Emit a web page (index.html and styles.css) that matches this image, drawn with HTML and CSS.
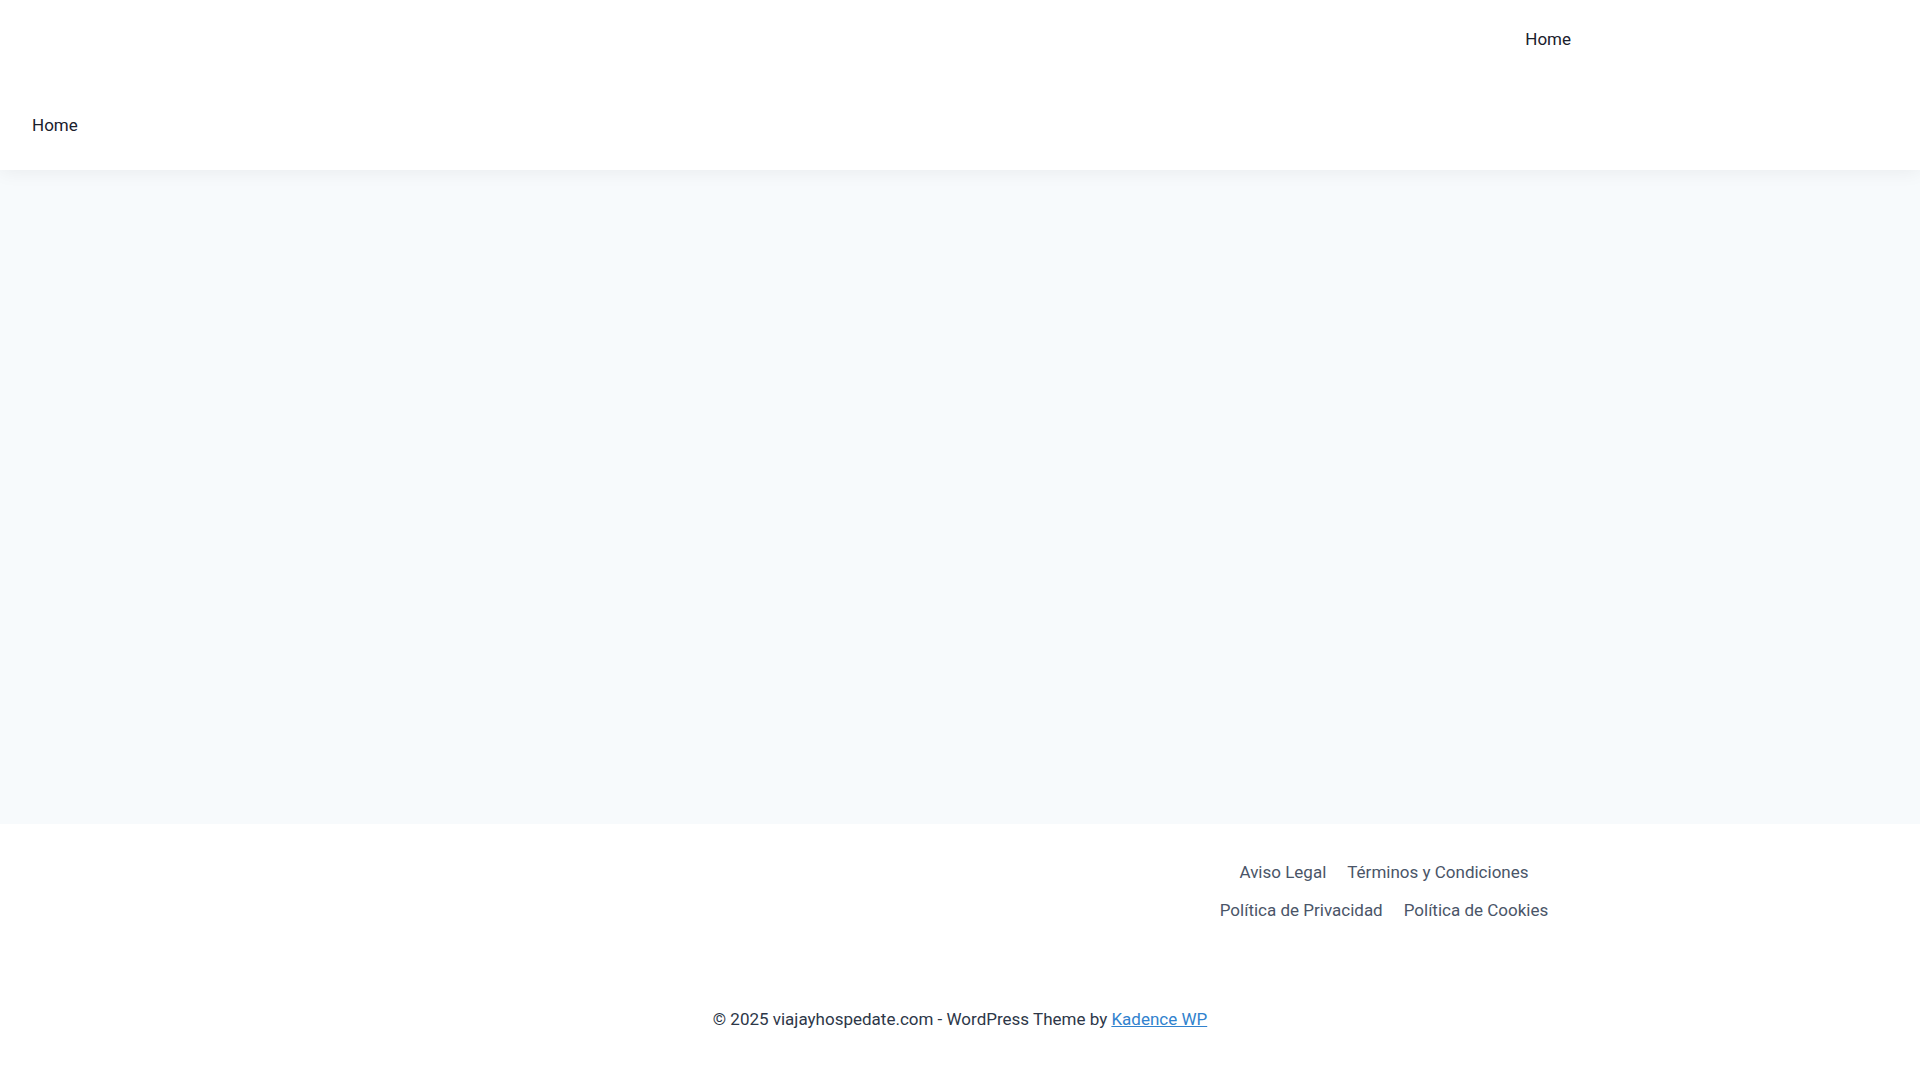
FILE: index.html
```html
<!DOCTYPE html>
<html lang="es">
<head>
  <meta charset="UTF-8" />
  <meta name="viewport" content="width=device-width, initial-scale=1.0"/>
  <title>viajayhospedate.com</title>
  <link rel="stylesheet" href="styles.css">
</head>
<body>
  <!-- Header -->
  <header class="site-header">
    <div class="header-top">
      <div class="container header-top-inner">
        <nav class="main-nav">
          <a href="#">Home</a>
        </nav>
      </div>
    </div>
    <div class="header-bottom">
      <nav class="second-nav">
        <a href="#">Home</a>
      </nav>
    </div>
  </header>

  <!-- Content -->
  <main class="site-main"></main>

  <!-- Footer -->
  <footer class="site-footer">
    <div class="footer-middle">
      <div class="container footer-cols">
        <div class="footer-col"></div>
        <div class="footer-col"></div>
        <div class="footer-col">
          <ul class="footer-nav">
            <li><a href="#">Aviso Legal</a></li>
            <li><a href="#">Términos y Condiciones</a></li>
            <li><a href="#">Política de Privacidad</a></li>
            <li><a href="#">Política de Cookies</a></li>
          </ul>
        </div>
      </div>
    </div>
    <div class="footer-bottom">
      <p>&copy; 2025 viajayhospedate.com - WordPress Theme by <a href="#">Kadence WP</a></p>
    </div>
  </footer>
</body>
</html>
```

FILE: styles.css
```css
* { box-sizing: border-box; margin: 0; padding: 0; }

body {
  font-family: Roboto, "Noto Sans", "Liberation Sans", sans-serif;
  font-size: 17px;
  line-height: 1.6;
  color: #2d3748;
  background: #fff;
  min-height: 100vh;
  display: flex;
  flex-direction: column;
}

a { text-decoration: none; color: inherit; }

.container {
  width: 100%;
  max-width: 1290px;
  margin: 0 auto;
  padding: 0 24px;
}

/* header */
.site-header {
  background: #fff;
  position: relative;
  z-index: 2;
  box-shadow: 0 2px 18px rgba(0, 0, 0, 0.06);
}

.header-top { height: 80px; }

.header-top-inner {
  height: 100%;
  display: flex;
  justify-content: flex-end;
  align-items: center;
}

.main-nav a {
  display: block;
  padding: 0 10px;
  color: #1a202c;
}

.header-bottom {
  height: 90px;
  display: flex;
  align-items: center;
  padding: 2px 0 0 32px;
}

.second-nav a { color: #1a202c; }

/* main */
.site-main {
  height: 654px;
  background: #f7fafc;
}

/* footer */
.footer-middle { padding: 29px 0 31px; }

.footer-cols {
  display: grid;
  grid-template-columns: repeat(3, 1fr);
  gap: 30px;
}

.footer-nav {
  list-style: none;
  display: flex;
  flex-wrap: wrap;
  justify-content: center;
  column-gap: 21px;
  padding: 0 10px;
}

.footer-nav li { line-height: 38px; }

.footer-nav a { color: #4a5568; }

.footer-bottom {
  flex: 1;
  min-height: 120px;
  display: flex;
  align-items: center;
  justify-content: center;
  text-align: center;
  color: #2d3748;
}

.footer-bottom a {
  color: #3182ce;
  text-decoration: underline;
}
```
